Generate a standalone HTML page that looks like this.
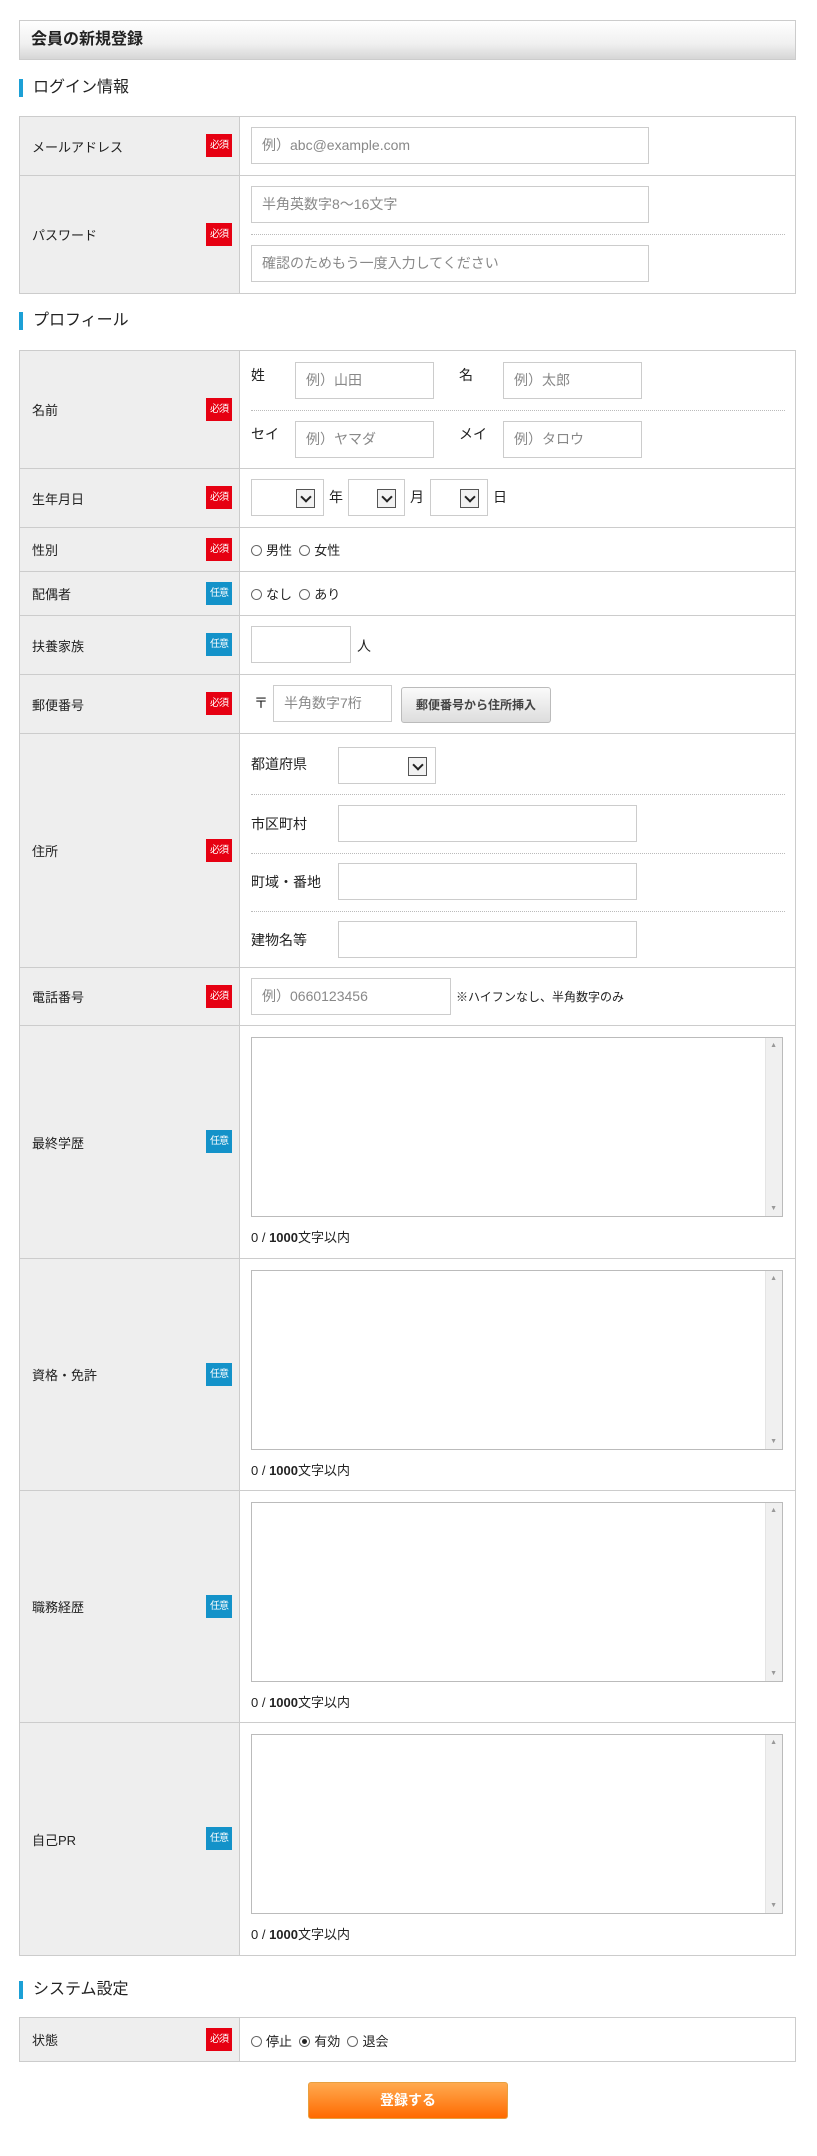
<!DOCTYPE html>
<html><head><meta charset="utf-8"><style>
*{box-sizing:border-box;margin:0;padding:0}
body{width:817px;height:2156px;background:#fff;font-family:"Liberation Sans","Noto Sans CJK JP",sans-serif;font-size:13px;color:#222;position:relative}
.hdr{position:absolute;left:19px;top:20px;width:777px;height:40px;border:1px solid #ccc;background:linear-gradient(#fff,#f0f0f0 60%,#d6d6d6);font-weight:bold;font-size:16px;line-height:38px;padding-left:11px}
.h2{position:absolute;left:19px;height:18px;border-left:4px solid #1ca0d6;padding-left:10px;font-size:16px;line-height:18px}
.tbl{position:absolute;left:19px;width:777px;border:1px solid #ccc;border-bottom:none}
.row{display:flex;border-bottom:1px solid #ccc;position:relative}
.lab{width:220px;background:#eee;border-right:1px solid #ccc;position:relative;display:flex;align-items:center;padding-left:12px;font-size:13px}
.bd{position:absolute;left:186px;top:50%;margin-top:-12px;width:26px;height:23px;color:#fff;font-size:10px;line-height:23px;text-align:center;letter-spacing:-1px}
.req{background:#e60012}.opt{background:#1392c9}
.cnt{flex:1;padding:0 13px 0 11px;position:relative}
.in{position:absolute;height:37px;border:1px solid #ccc;background:#fff;color:#888;font-size:14px;line-height:35px;padding-left:10px}
.dot{position:absolute;left:11px;right:10px;border-top:1px dotted #bbb}
.t{position:absolute;font-size:14px}
.sel{position:absolute;height:37px;border:1px solid #ccc;background:#fff}
.sel i{position:absolute;right:8px;top:9px;width:19px;height:19px;border:1px solid #555;background:#f2f2f2}
.sel i:after{content:"";position:absolute;left:5px;top:3px;width:6px;height:6px;border-right:2px solid #222;border-bottom:2px solid #222;transform:rotate(45deg)}
.rad{display:inline-block;width:11px;height:11px;border:1px solid #666;border-radius:50%;vertical-align:-1px;margin-right:4px;position:relative}
.rad.on:after{content:"";position:absolute;left:2px;top:2px;width:5px;height:5px;border-radius:50%;background:#222}
.ta{position:absolute;left:11px;top:11px;width:532px;height:180px;border:1px solid #bbb;background:#fff}
.ta:after{content:"";position:absolute;right:0;top:0;width:16px;height:100%;background:#f0f0f0;border-left:1px solid #e4e4e4}
.ta b{position:absolute;right:5px;font-size:7px;color:#999;z-index:1;font-weight:normal}
.cc{position:absolute;left:11px;top:201px;font-size:13px}
</style></head><body>
<div class="hdr">会員の新規登録</div>
<div class="h2" style="top:79px">ログイン情報</div>
<div class="tbl" style="top:116px">
 <div class="row" style="height:59px"><div class="lab">メールアドレス<span class="bd req">必須</span></div><div class="cnt"><div class="in" style="left:11px;top:10px;width:398px">例）abc@example.com</div></div></div>
 <div class="row" style="height:118px"><div class="lab">パスワード<span class="bd req">必須</span></div><div class="cnt"><div class="in" style="left:11px;top:10px;width:398px">半角英数字8～16文字</div><div class="dot" style="top:58px"></div><div class="in" style="left:11px;top:69px;width:398px">確認のためもう一度入力してください</div></div></div>
</div>
<div class="h2" style="top:312px">プロフィール</div>
<div class="tbl" style="top:350px">
 <div class="row" style="height:118px"><div class="lab">名前<span class="bd req">必須</span></div><div class="cnt">
  <span class="t" style="left:11px;top:14px">姓</span><div class="in" style="left:55px;top:11px;width:139px">例）山田</div>
  <span class="t" style="left:219px;top:14px">名</span><div class="in" style="left:263px;top:11px;width:139px">例）太郎</div>
  <div class="dot" style="top:59px"></div>
  <span class="t" style="left:11px;top:73px">セイ</span><div class="in" style="left:55px;top:70px;width:139px">例）ヤマダ</div>
  <span class="t" style="left:219px;top:73px">メイ</span><div class="in" style="left:263px;top:70px;width:139px">例）タロウ</div>
 </div></div>
 <div class="row" style="height:59px"><div class="lab">生年月日<span class="bd req">必須</span></div><div class="cnt">
  <div class="sel" style="left:11px;top:10px;width:73px"><i></i></div><span class="t" style="left:89px;top:18px">年</span>
  <div class="sel" style="left:108px;top:10px;width:57px"><i></i></div><span class="t" style="left:170px;top:18px">月</span>
  <div class="sel" style="left:190px;top:10px;width:58px"><i></i></div><span class="t" style="left:253px;top:18px">日</span>
 </div></div>
 <div class="row" style="height:44px"><div class="lab">性別<span class="bd req">必須</span></div><div class="cnt" style="padding-top:12px;font-size:13px"><span class="rad"></span>男性&nbsp;&nbsp;<span class="rad"></span>女性</div></div>
 <div class="row" style="height:44px"><div class="lab">配偶者<span class="bd opt">任意</span></div><div class="cnt" style="padding-top:12px;font-size:13px"><span class="rad"></span>なし&nbsp;&nbsp;<span class="rad"></span>あり</div></div>
 <div class="row" style="height:59px"><div class="lab">扶養家族<span class="bd opt">任意</span></div><div class="cnt"><div class="in" style="left:11px;top:10px;width:100px"></div><span class="t" style="left:117px;top:20px">人</span></div></div>
 <div class="row" style="height:59px"><div class="lab">郵便番号<span class="bd req">必須</span></div><div class="cnt"><span class="t" style="left:14px;top:18px">〒</span><div class="in" style="left:33px;top:10px;width:119px">半角数字7桁</div>
  <div style="position:absolute;left:161px;top:12px;width:150px;height:36px;border:1px solid #bbb;border-radius:3px;background:linear-gradient(#fafafa,#ddd);font-size:12px;font-weight:bold;color:#444;text-align:center;line-height:34px">郵便番号から住所挿入</div></div></div>
 <div class="row" style="height:234px"><div class="lab">住所<span class="bd req">必須</span></div><div class="cnt">
  <span class="t" style="left:11px;top:20px">都道府県</span><div class="sel" style="left:98px;top:13px;width:98px"><i></i></div>
  <div class="dot" style="top:60px"></div>
  <span class="t" style="left:11px;top:80px">市区町村</span><div class="in" style="left:98px;top:71px;width:299px"></div>
  <div class="dot" style="top:119px"></div>
  <span class="t" style="left:11px;top:138px">町域・番地</span><div class="in" style="left:98px;top:129px;width:299px"></div>
  <div class="dot" style="top:177px"></div>
  <span class="t" style="left:11px;top:196px">建物名等</span><div class="in" style="left:98px;top:187px;width:299px"></div>
 </div></div>
 <div class="row" style="height:58px"><div class="lab">電話番号<span class="bd req">必須</span></div><div class="cnt"><div class="in" style="left:11px;top:10px;width:200px">例）0660123456</div><span class="t" style="left:216px;top:20px;font-size:12px">※ハイフンなし、半角数字のみ</span></div></div>
 <div class="row" style="height:233px"><div class="lab">最終学歴<span class="bd opt">任意</span></div><div class="cnt"><div class="ta"><b style="top:4px">▲</b><b style="bottom:4px">▼</b></div><span class="cc">0 / <b>1000</b>文字以内</span></div></div>
 <div class="row" style="height:232px"><div class="lab">資格・免許<span class="bd opt">任意</span></div><div class="cnt"><div class="ta"><b style="top:4px">▲</b><b style="bottom:4px">▼</b></div><span class="cc">0 / <b>1000</b>文字以内</span></div></div>
 <div class="row" style="height:232px"><div class="lab">職務経歴<span class="bd opt">任意</span></div><div class="cnt"><div class="ta"><b style="top:4px">▲</b><b style="bottom:4px">▼</b></div><span class="cc">0 / <b>1000</b>文字以内</span></div></div>
 <div class="row" style="height:233px"><div class="lab">自己PR<span class="bd opt">任意</span></div><div class="cnt"><div class="ta"><b style="top:4px">▲</b><b style="bottom:4px">▼</b></div><span class="cc">0 / <b>1000</b>文字以内</span></div></div>
</div>
<div class="h2" style="top:1981px">システム設定</div>
<div class="tbl" style="top:2017px">
 <div class="row" style="height:44px"><div class="lab">状態<span class="bd req">必須</span></div><div class="cnt" style="padding-top:13px"><span class="rad"></span>停止&nbsp;&nbsp;<span class="rad on"></span>有効&nbsp;&nbsp;<span class="rad"></span>退会</div></div>
</div>
<div style="position:absolute;left:308px;top:2082px;width:200px;height:37px;border:1px solid #e8a040;border-radius:3px;background:linear-gradient(#ffaa50,#ff6a00);color:#fff;font-weight:bold;font-size:14px;text-align:center;line-height:35px">登録する</div>
</body></html>
